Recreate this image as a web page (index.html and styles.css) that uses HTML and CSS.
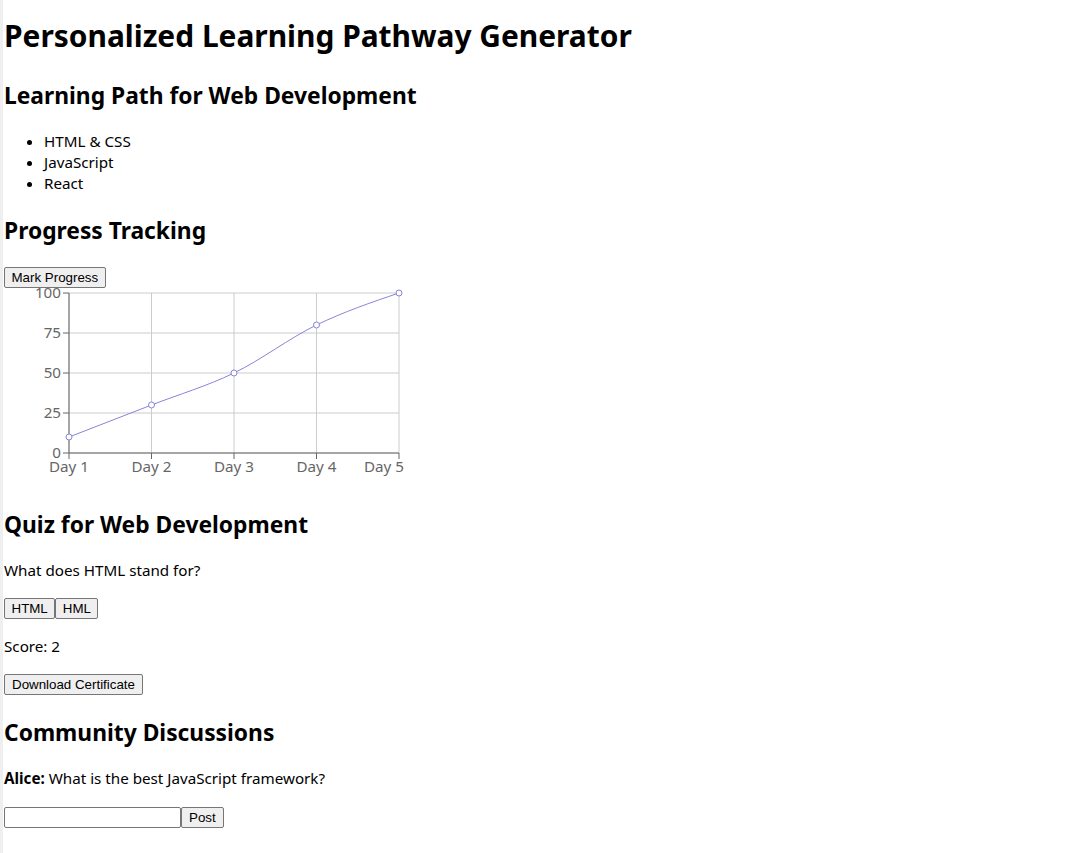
FILE: index.html
```html
<!DOCTYPE html>
<html lang="en">
<head>
<meta charset="utf-8">
<title>Personalized Learning Pathway Generator</title>
<link rel="stylesheet" href="styles.css">
</head>
<body>
<h1 class="title">Personalized Learning Pathway Generator</h1>

<section class="path">
  <h2 class="section-title">Learning Path for Web Development</h2>
  <ul class="topics">
    <li>HTML &amp; CSS</li>
    <li>JavaScript</li>
    <li>React</li>
  </ul>
</section>

<section class="progress">
  <h2 class="section-title">Progress Tracking</h2>
  <div class="row row-progress"><button class="btn">Mark Progress</button></div>
  <svg class="chart" width="400" height="200" viewBox="0 0 400 200" xmlns="http://www.w3.org/2000/svg">
    <g class="grid" stroke="#ccc" fill="none">
      <line x1="65" y1="165" x2="395" y2="165"/>
      <line x1="65" y1="125" x2="395" y2="125"/>
      <line x1="65" y1="85" x2="395" y2="85"/>
      <line x1="65" y1="45" x2="395" y2="45"/>
      <line x1="65" y1="5" x2="395" y2="5"/>
      <line x1="65" y1="5" x2="65" y2="165"/>
      <line x1="147.5" y1="5" x2="147.5" y2="165"/>
      <line x1="230" y1="5" x2="230" y2="165"/>
      <line x1="312.5" y1="5" x2="312.5" y2="165"/>
      <line x1="395" y1="5" x2="395" y2="165"/>
    </g>
    <g class="axis" stroke="#666" fill="none">
      <line x1="65" y1="165" x2="395" y2="165"/>
      <line x1="65" y1="171" x2="65" y2="165"/>
      <line x1="147.5" y1="171" x2="147.5" y2="165"/>
      <line x1="230" y1="171" x2="230" y2="165"/>
      <line x1="312.5" y1="171" x2="312.5" y2="165"/>
      <line x1="395" y1="171" x2="395" y2="165"/>
      <line x1="65" y1="5" x2="65" y2="165"/>
      <line x1="59" y1="165" x2="65" y2="165"/>
      <line x1="59" y1="125" x2="65" y2="125"/>
      <line x1="59" y1="85" x2="65" y2="85"/>
      <line x1="59" y1="45" x2="65" y2="45"/>
      <line x1="59" y1="5" x2="65" y2="5"/>
    </g>
    <g class="tick-labels">
      <text x="65" y="173" dy="0.71em" text-anchor="middle">Day 1</text>
      <text x="147.5" y="173" dy="0.71em" text-anchor="middle">Day 2</text>
      <text x="230" y="173" dy="0.71em" text-anchor="middle">Day 3</text>
      <text x="312.5" y="173" dy="0.71em" text-anchor="middle">Day 4</text>
      <text x="400" y="173" dy="0.71em" text-anchor="end">Day 5</text>
      <text x="57" y="165" dy="0.355em" text-anchor="end">0</text>
      <text x="57" y="125" dy="0.355em" text-anchor="end">25</text>
      <text x="57" y="85" dy="0.355em" text-anchor="end">50</text>
      <text x="57" y="45" dy="0.355em" text-anchor="end">75</text>
      <text x="57" y="5" dy="0.355em" text-anchor="end">100</text>
    </g>
    <path class="line" d="M65,149C92.5,138.333,120,127.667,147.5,117C175,106.333,202.5,98.333,230,85C257.5,71.667,285,50.333,312.5,37C340,23.667,367.5,14.333,395,5" fill="none" stroke="#8884d8" stroke-width="1"/>
    <g class="dots" fill="#fff" stroke="#8884d8" stroke-width="1">
      <circle cx="65" cy="149" r="3"/>
      <circle cx="147.5" cy="117" r="3"/>
      <circle cx="230" cy="85" r="3"/>
      <circle cx="312.5" cy="37" r="3"/>
      <circle cx="395" cy="5" r="3"/>
    </g>
  </svg>
</section>

<section class="quiz">
  <h2 class="section-title">Quiz for Web Development</h2>
  <p class="question">What does HTML stand for?</p>
  <div class="row row-answers"><button class="btn">HTML</button><button class="btn">HML</button></div>
  <p class="score">Score: 2</p>
  <div class="row row-cert"><button class="btn">Download Certificate</button></div>
</section>

<section class="community">
  <h2 class="section-title">Community Discussions</h2>
  <p class="post"><strong>Alice:</strong> What is the best JavaScript framework?</p>
  <div class="row row-form"><input class="field" type="text"><button class="btn">Post</button></div>
</section>
</body>
</html>
```

FILE: styles.css
```css
html {
  background: #fff;
}

body {
  margin: 0;
  min-height: 100vh;
  box-sizing: border-box;
  border-left: 3px solid #efefef;
  padding-left: 1px;
  font-family: "Noto Sans", "Open Sans", sans-serif;
  font-size: 15.2px;
  line-height: 21px;
  color: #000;
}

.title {
  margin: 15px 0 23px;
  font-size: 29.9px;
  line-height: 42px;
  font-weight: 700;
}

.section-title {
  margin: 0 0 19px;
  font-size: 22.8px;
  line-height: 32px;
  font-weight: 700;
}

.progress .section-title {
  margin-bottom: 20px;
}

.topics {
  margin: 0 0 21px;
  padding-left: 40px;
}

.row {
  display: flex;
  height: 21px;
}

.chart {
  display: block;
  margin-bottom: 21px;
}

.tick-labels {
  font-family: "Noto Sans", "Open Sans", sans-serif;
  font-size: 15.2px;
  fill: #666;
}

.question {
  margin: 0 0 17px;
}

.row-answers {
  margin-bottom: 17px;
}

.score {
  margin: 0 0 17px;
}

.row-cert {
  margin-bottom: 22px;
}

.post {
  margin: 0 0 18px;
}

.btn {
  box-sizing: border-box;
  height: 21px;
  margin: 0;
  padding: 1px 6.5px;
  border: 1px solid #767676;
  border-radius: 2px;
  background: #efefef;
  color: #000;
  font-family: "Liberation Sans", Arial, sans-serif;
  font-size: 13.333px;
  line-height: 15px;
}

.row-cert .btn,
.row-form .btn {
  padding: 1px 7px;
}

.field {
  box-sizing: border-box;
  width: 177px;
  height: 21px;
  margin: 0;
  padding: 1px 2px;
  border: 1px solid #767676;
  border-radius: 2px;
  background: #fff;
  font-family: "Liberation Sans", Arial, sans-serif;
  font-size: 13.333px;
}
```
